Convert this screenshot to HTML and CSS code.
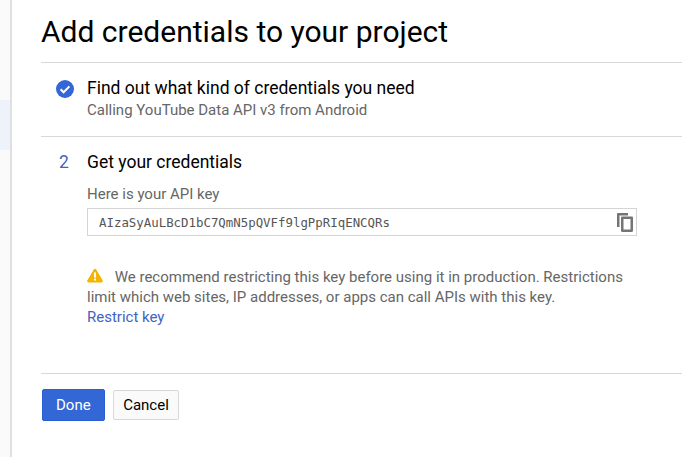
FILE: index.html
```html
<!DOCTYPE html>
<html lang="en">
<head>
    <meta charset="UTF-8">
    <title>Add credentials to your project</title>
    <link rel="stylesheet" href="styles.css">
</head>
<body>

<div class="page">
  <div class="sidebar">
    <div class="sidebar-active"></div>
  </div>

  <div class="main">
    <h1 class="title">Add credentials to your project</h1>

    <div class="step step-done">
      <div class="step-mark">
        <svg class="check" width="18" height="18" viewBox="0 0 18 18">
          <circle cx="9" cy="9" r="9" fill="#3367d6"/>
          <path d="M4.6 9.3l3 3 5.8-5.9" fill="none" stroke="#fff" stroke-width="2"/>
        </svg>
      </div>
      <div class="step-body">
        <div class="step-title">Find out what kind of credentials you need</div>
        <div class="step-sub">Calling YouTube Data API v3 from Android</div>
      </div>
    </div>

    <div class="step step-current">
      <div class="step-mark step-num">2</div>
      <div class="step-body">
        <div class="step-title">Get your credentials</div>
        <div class="key-label">Here is your API key</div>
        <div class="key-box">
          <span class="key-text">AIzaSyAuLBcD1bC7QmN5pQVFf9lgPpRIqENCQRs</span>
          <svg class="copy" width="16" height="19" viewBox="0 0 16 19">
            <path d="M11 0H1.200C.5 0 0 .5 0 1.200V14h2.500V2.500H11z" fill="#757575"/>
            <path d="M14.800 3.500H5.200C4.500 3.500 4 4 4 4.700v13.100c0 .7.5 1.200 1.200 1.200h9.600c.7 0 1.200-.5 1.200-1.200V4.700c0-.7-.5-1.200-1.200-1.200zM13.500 16.500h-7V6h7z" fill="#757575"/>
          </svg>
        </div>
        <p class="warning">
          <svg class="warn-icon" width="16" height="15" viewBox="0 0 16 14">
            <path d="M8 0.300C7.500 0.300 7.100 0.600 6.800 1.100L0.400 11.800C-0.200 12.800 0.400 13.900 1.500 13.900H14.500C15.600 13.900 16.200 12.800 15.600 11.800L9.200 1.100C8.900 0.600 8.500 0.300 8 0.300z" fill="#f4b400"/>
            <rect x="7" y="4" width="2" height="5" fill="#fff"/>
            <rect x="7" y="10" width="2" height="2" fill="#fff"/>
          </svg>
          We recommend restricting this key before using it in production. Restrictions limit which web sites, IP addresses, or apps can call APIs with this key.
          <a class="link" href="#">Restrict key</a>
        </p>
      </div>
    </div>

    <div class="actions">
      <button class="btn btn-primary">Done</button>
      <button class="btn">Cancel</button>
    </div>
  </div>
</div>

</body>
</html>
```

FILE: styles.css
```css
html, body {
  margin: 0;
  padding: 0;
}

body {
  background: #fff;
  font-family: Roboto, "Liberation Sans", sans-serif;
  font-size: 15px;
  color: #000;
  overflow: hidden;
}

.page {
  display: flex;
  min-height: 457px;
}

.sidebar {
  width: 10px;
  flex: none;
  background: #fafafa;
  border-right: 2px solid #e0e0e0;
  padding-top: 100px;
}

.sidebar-active {
  height: 50px;
  background: #eef2fb;
}

.main {
  flex: 1;
  padding-left: 29px;
}

.title {
  margin: 0;
  padding: 14px 0 12px;
  font-size: 30px;
  line-height: 36px;
  font-weight: 400;
  border-bottom: 1px solid #d8d8d8;
}

.step {
  display: flex;
  border-bottom: 1px solid #d8d8d8;
}

.step-done {
  padding: 14px 0 16px;
}

.step-current {
  padding: 14px 0 46px;
}

.step-mark {
  width: 46px;
  flex: none;
  box-sizing: border-box;
  padding-left: 14px;
}

.check {
  display: block;
  margin: 3px 0 0 0.5px;
}

.step-num {
  padding-left: 18px;
  font-size: 17.500px;
  line-height: 22px;
  color: #3f63c4;
}

.step-body {
  width: 550px;
}

.step-title {
  font-size: 17.500px;
  line-height: 22px;
}

.step-sub {
  margin-top: 1px;
  line-height: 20px;
  color: #666;
}

.key-label {
  margin-top: 11px;
  line-height: 20px;
  color: #666;
}

.key-box {
  display: flex;
  align-items: center;
  justify-content: space-between;
  height: 28px;
  margin-top: 4px;
  padding: 0 2px 0 11px;
  box-sizing: border-box;
  border: 1px solid #d4d4d4;
}

.key-text {
  font-family: "DejaVu Sans Mono", monospace;
  font-size: 12.400px;
  color: #555;
}

.copy {
  display: block;
  margin-right: 1px;
}

.warning {
  margin: 31px 0 0;
  line-height: 20px;
  color: #666;
}

.warn-icon {
  vertical-align: -1px;
  margin-right: 8px;
}

.link {
  display: block;
  color: #3f63c4;
  text-decoration: none;
}

.actions {
  display: flex;
  align-items: center;
  gap: 8px;
  padding: 15px 0 0 1px;
}

.btn {
  height: 30px;
  padding: 0 9.500px;
  font-family: inherit;
  font-size: 15px;
  color: #000;
  background: #fafafa;
  border: 1px solid #d8d8d8;
  border-radius: 2px;
}

.btn-primary {
  height: 32px;
  padding: 0 13px;
  color: #fff;
  background: #3367d6;
  border-color: #2a5fd0;
}
```
